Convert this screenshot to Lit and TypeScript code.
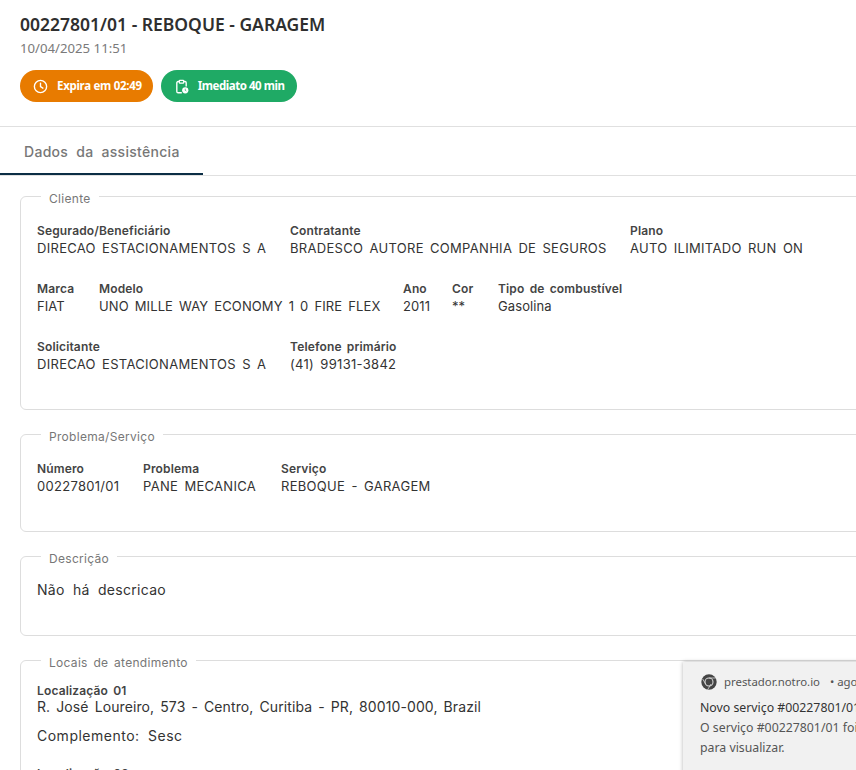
import { LitElement, html, css, svg } from "lit";
import { customElement } from "lit/decorators.js";

type Field = [string, string];
type Row = { cols: string; fields: Field[] };

const cliente: Row[] = [
  { cols: "r-a", fields: [["Segurado/Beneficiário", "DIRECAO ESTACIONAMENTOS S A"], ["Contratante", "BRADESCO AUTORE COMPANHIA DE SEGUROS"], ["Plano", "AUTO ILIMITADO RUN ON"]] },
  { cols: "r-b", fields: [["Marca", "FIAT"], ["Modelo", "UNO MILLE WAY ECONOMY 1 0 FIRE FLEX"], ["Ano", "2011"], ["Cor", "**"], ["Tipo de combustível", "Gasolina"]] },
  { cols: "r-a", fields: [["Solicitante", "DIRECAO ESTACIONAMENTOS S A"], ["Telefone primário", "(41) 99131-3842"]] },
];
const problema: Row[] = [
  { cols: "r-c", fields: [["Número", "00227801/01"], ["Problema", "PANE MECANICA"], ["Serviço", "REBOQUE - GARAGEM"]] },
];

const clock = svg`<circle cx="12" cy="12" r="9.8" fill="none" stroke="currentColor" stroke-width="2.2"/><path d="M12 6.5v5.8l3.8 2.4" fill="none" stroke="currentColor" stroke-width="2.2" stroke-linecap="round"/>`;
const clip = svg`<path d="M8.5 4H6.5a2 2 0 0 0-2 2v14a2 2 0 0 0 2 2h6" fill="none" stroke="currentColor" stroke-width="2.2"/><path d="M15.5 4h2a2 2 0 0 1 2 2v6" fill="none" stroke="currentColor" stroke-width="2.2"/><rect x="8.5" y="2" width="7" height="4.4" rx="1" fill="none" stroke="currentColor" stroke-width="2"/><circle cx="18" cy="18" r="5" fill="currentColor"/><path d="M18 15.5v2.7l1.7 1" fill="none" stroke="#1faa65" stroke-width="1.1"/>`;

@customElement("app-root")
export class AppRoot extends LitElement {
  static styles = css`
    :host { display: block; position: relative; width: 856px; height: 770px; overflow: hidden; background: #fff; font-family: Inter, "Noto Sans", sans-serif; color: #333; }
    .head { padding: 12px 20px 24px; border-bottom: 1px solid #e0e0e0; }
    h1 { margin: 0; font: 600 17.5px/24px "Noto Sans", sans-serif; color: #2f2f2f; }
    .date { margin-top: 2px; font: 400 13.2px/20px "Noto Sans", sans-serif; color: #7a7a7a; }
    .pills { display: flex; gap: 8px; margin-top: 12px; }
    .pill { display: flex; align-items: center; gap: 9px; height: 32px; padding: 0 12px 0 13px; border-radius: 16px; color: #fff; font: 700 11.5px/32px "Noto Sans", sans-serif; letter-spacing: -0.3px; }
    .pill svg { width: 15px; height: 15px; }
    .orange { background: #e87b00; padding-right: 11px; }
    .green { background: #1faa65; letter-spacing: -0.45px; }
    .tabs { height: 49px; box-sizing: border-box; border-bottom: 1px solid #e0e0e0; display: flex; }
    .tab { width: 203px; box-sizing: border-box; height: 48px; padding: 0 0 0 24px; font: 500 14px/50px Inter, sans-serif; color: #777; border-bottom: 2px solid #0b2e45; word-spacing: 4px; letter-spacing: .3px; }
    .content { width: 1100px; padding: 10px 0 0 20px; }
    fieldset { margin: 0 0 14px; padding: 15px 16px 0; border: 1px solid #ddd; border-radius: 6px; min-inline-size: 0; box-sizing: border-box; }
    legend { margin-left: 4px; padding: 4px 8px 0; font: 400 12px/17px Inter, sans-serif; color: #777; word-spacing: 2px; letter-spacing: .3px; }
    .cliente { height: 224px; }
    .problema { height: 108px; }
    .descricao { height: 90px; }
    .locais { height: 200px; padding-top: 11px; }
    .row { display: grid; margin-bottom: 22px; }
    .r-a { grid-template-columns: 253px 340px 1fr; }
    .r-b { grid-template-columns: 62px 304px 49px 46px 1fr; }
    .r-c { grid-template-columns: 106px 138px 1fr; }
    .label { font: 600 12px/17px Inter, sans-serif; color: #444; white-space: nowrap; letter-spacing: .15px; word-spacing: 2px; }
    .value { font: 400 13px/19px Inter, sans-serif; color: #333; white-space: nowrap; letter-spacing: .3px; word-spacing: 2.3px; }
    .r-b .value { letter-spacing: .1px; }
    .text { margin: 0; font: 400 14px/15px Inter, sans-serif; color: #333; letter-spacing: .3px; word-spacing: 4px; }
    .addr { letter-spacing: .1px; word-spacing: 2px; }
    .comp { margin-top: 14px; letter-spacing: .5px; }
    .loc2 { margin-top: 22px; }
    .toast { position: absolute; left: 683px; top: 662px; width: 300px; height: 120px; background: #f1f1f1; box-shadow: 0 0 4px rgba(0,0,0,.3); padding: 9px 17px; box-sizing: border-box; font: 400 12.3px/20px "Noto Sans", sans-serif; color: #333; white-space: nowrap; }
    .src { display: flex; align-items: center; gap: 7px; height: 22px; margin-bottom: 5px; color: #555; font-size: 11.4px; }
    .src svg { width: 16px; height: 16px; margin-left: 1px; }
    .muted { color: #555; }
  `;

  private rows(rows: Row[]) {
    return rows.map(
      (r) => html`<div class="row ${r.cols}">${r.fields.map(([l, v]) => html`<div><div class="label">${l}</div><div class="value">${v}</div></div>`)}</div>`
    );
  }

  render() {
    return html`
      <header class="head">
        <h1>00227801/01 - REBOQUE - GARAGEM</h1>
        <div class="date">10/04/2025 11:51</div>
        <div class="pills">
          <div class="pill orange"><svg viewBox="0 0 24 24">${clock}</svg>Expira em 02:49</div>
          <div class="pill green"><svg viewBox="0 0 24 24">${clip}</svg>Imediato 40 min</div>
        </div>
      </header>
      <nav class="tabs"><div class="tab">Dados da assistência</div></nav>
      <main class="content">
        <fieldset class="cliente"><legend>Cliente</legend>${this.rows(cliente)}</fieldset>
        <fieldset class="problema"><legend>Problema/Serviço</legend>${this.rows(problema)}</fieldset>
        <fieldset class="descricao"><legend>Descrição</legend><p class="text">Não há descricao</p></fieldset>
        <fieldset class="locais"><legend>Locais de atendimento</legend>
          <div class="label">Localização 01</div>
          <p class="text addr">R. José Loureiro, 573 - Centro, Curitiba - PR, 80010-000, Brazil</p>
          <p class="text comp">Complemento: Sesc</p>
          <div class="label loc2">Localização 02</div>
        </fieldset>
      </main>
      <aside class="toast">
        <div class="src">
          <svg viewBox="0 0 24 24"><circle cx="12" cy="12" r="11.5" fill="#444"/><circle cx="12" cy="12" r="6" fill="none" stroke="#d8d8d8" stroke-width="1.6"/><path d="M12 6h10M7 15 2.5 7.5M15 15l-5 8.5" stroke="#d8d8d8" stroke-width="1.2"/></svg>
          <span>prestador.notro.io</span><span>&nbsp;• agora</span>
        </div>
        <div>Novo serviço #00227801/01</div>
        <div class="muted">O serviço #00227801/01 foi criado. Clique</div>
        <div class="muted">para visualizar.</div>
      </aside>
    `;
  }
}
